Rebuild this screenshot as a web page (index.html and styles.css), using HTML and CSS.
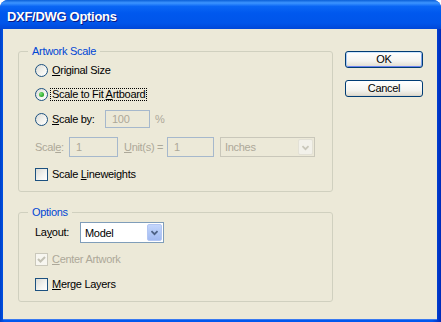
FILE: index.html
```html
<!DOCTYPE html>
<html lang="en">
<head>
    <meta charset="UTF-8">
    <meta name="viewport" content="width=device-width, initial-scale=1.0">
    <title>DXF/DWG Options</title>
    <link rel="stylesheet" href="styles.css">
</head>
<body>
    <div class="window">
        <div class="titlebar">DXF/DWG Options</div>

        <div class="client">
            <div class="groups">
                <fieldset class="group group-scale">
                    <legend>Artwork Scale</legend>

                    <div class="row h24">
                        <span class="radio"></span>
                        <span class="label"><u>O</u>riginal Size</span>
                    </div>

                    <div class="row h24">
                        <span class="radio checked"></span>
                        <span class="label focus">Scale to Fit <u>A</u>rtboard</span>
                    </div>

                    <div class="row h26">
                        <span class="radio"></span>
                        <span class="label label-by"><u>S</u>cale by:</span>
                        <span class="field field-pct">100</span>
                        <span class="unit-pct">%</span>
                    </div>

                    <div class="row h30 disabled">
                        <span class="label-scale">Scal<u>e</u>:</span>
                        <span class="field field-scale">1</span>
                        <span class="label-unit"><u>U</u>nit(s) =</span>
                        <span class="field field-unit">1</span>
                        <span class="select select-off">
                            <span class="select-value">Inches</span>
                            <span class="select-btn">
                                <svg width="15" height="17" viewBox="0 0 15 17"><polyline points="4,7 7.5,10.5 11,7" fill="none" stroke="#C9C7BA" stroke-width="2"/></svg>
                            </span>
                        </span>
                    </div>

                    <div class="row h24">
                        <span class="check"></span>
                        <span class="label">Scale <u>L</u>ineweights</span>
                    </div>
                </fieldset>

                <fieldset class="group group-options">
                    <legend>Options</legend>

                    <div class="row h26">
                        <span class="label-layout">La<u>y</u>out:</span>
                        <span class="select select-layout">
                            <span class="select-value">Model</span>
                            <span class="select-btn">
                                <svg width="15" height="17" viewBox="0 0 15 17"><polyline points="4,7 7.5,10.5 11,7" fill="none" stroke="#4D6185" stroke-width="2"/></svg>
                            </span>
                        </span>
                    </div>

                    <div class="row h28 disabled">
                        <span class="check check-off">
                            <svg width="11" height="11" viewBox="0 0 11 11"><polyline points="2,5 4.5,7.5 9,3" fill="none" stroke="#C3C1B4" stroke-width="2"/></svg>
                        </span>
                        <span class="label"><u>C</u>enter Artwork</span>
                    </div>

                    <div class="row h22">
                        <span class="check"></span>
                        <span class="label"><u>M</u>erge Layers</span>
                    </div>
                </fieldset>
            </div>

            <div class="buttons">
                <div class="btn btn-default">OK</div>
                <div class="btn">Cancel</div>
            </div>
        </div>
    </div>
</body>
</html>
```

FILE: styles.css
```css
body {
    margin: 0;
    background: #fff;
    font-family: "Liberation Sans", Arial, sans-serif;
    font-size: 11px;
    letter-spacing: -0.3px;
    color: #000;
}
.window {
    width: 441px;
    height: 322px;
    display: flex;
    flex-direction: column;
    background: linear-gradient(to right, #0040C8 0%, #0058EE 1%, #0058EE 98%, #0029B8 100%);
    border-radius: 8px 8px 0 0;
    overflow: hidden;
}
.titlebar {
    height: 29px;
    box-sizing: border-box;
    padding: 4px 0 0 7px;
    line-height: 25px;
    font-size: 13px;
    font-weight: bold;
    letter-spacing: -0.3px;
    color: #fff;
    text-shadow: 1px 1px #0A1883;
    background: linear-gradient(to bottom, #0A5FD8 0%, #3D95FF 10%, #0A66F4 22%, #0058EE 45%, #0055EA 80%, #0047D8 100%);
}
.client {
    flex: 1;
    margin: 0 4px 3px 3px;
    background: #ECE9D8;
    display: flex;
    align-items: flex-start;
    gap: 12px;
    padding: 16px 0 0 15px;
    box-shadow: 0 1px 0 #3A7AF0;
}

/* group boxes */
.groups {
    width: 315px;
}
.group {
    margin: 0;
    min-width: 0;
    border: 1px solid #D0D0BF;
    border-radius: 3px;
    padding: 0 0 5px 16px;
}
.group-options {
    margin-top: 14px;
    padding-bottom: 6px;
}
.group legend {
    margin-left: -7px;
    padding: 0 4px;
    line-height: 13px;
    color: #0046D5;
}
.row {
    display: flex;
    align-items: center;
}
.h22 { height: 22px; }
.h24 { height: 24px; }
.h26 { height: 26px; }
.h28 { height: 28px; }
.h30 { height: 30px; }
.disabled { color: #ACA899; }

.label {
    margin-left: 2px;
    padding: 0 1px;
    border: 1px dotted transparent;
    line-height: 11px;
}
.label.focus { border-color: #000; }
.label-by {
    width: 55px;
    box-sizing: border-box;
}
.unit-pct {
    margin-left: 5px;
    color: #ACA899;
}
.label-scale { width: 34px; }
.label-unit { width: 43px; margin-left: 6px; }
.label-layout { width: 45px; }

/* radios and checks */
.radio, .check {
    flex: none;
    width: 13px;
    height: 13px;
    box-sizing: border-box;
    border: 1px solid #1C5180;
    background: linear-gradient(135deg, #DCDCD7 0%, #F4F4F0 60%, #FFFFFF 100%);
    position: relative;
}
.radio { border-radius: 50%; }
.radio.checked::after {
    content: "";
    position: absolute;
    left: 3px;
    top: 3px;
    width: 5px;
    height: 5px;
    border-radius: 50%;
    background: radial-gradient(circle at 35% 35%, #7CE27A, #21A121 75%);
}
.check-off {
    border-color: #CAC8BB;
    background: #F7F6F0;
    display: flex;
}
.check-off svg { display: block; }

/* edit fields */
.field {
    flex: none;
    box-sizing: border-box;
    height: 20px;
    border: 1px solid #A6B8CC;
    background: #ECE9D8;
    color: #ACA899;
    padding-left: 6px;
    line-height: 18px;
}
.field-pct { width: 45px; height: 18px; line-height: 16px; }
.field-scale { width: 49px; }
.field-unit { width: 47px; }

/* combo boxes */
.select {
    flex: none;
    box-sizing: border-box;
    display: flex;
    align-items: stretch;
    border: 1px solid #7F9DB9;
    background: #fff;
    padding: 1px;
}
.select-value {
    flex: 1;
    padding-left: 3px;
    line-height: 17px;
}
.select-btn {
    width: 15px;
    box-sizing: border-box;
    border-radius: 2px;
    display: flex;
    align-items: center;
}
.select-off {
    width: 95px;
    height: 20px;
    margin-left: 6px;
    border-color: #C9C7BA;
    background: #ECE9D8;
}
.select-off .select-btn {
    background: #F2F1EA;
    border: 1px solid #E3E1D6;
}
.select-layout {
    width: 84px;
    height: 21px;
    color: #000;
}
.select-layout .select-value { line-height: 18px; }
.select-layout .select-btn {
    background: linear-gradient(to bottom, #C4D6FC 0%, #B2C8F6 50%, #A2BAF2 100%);
    border: 1px solid #B3C6F3;
}

/* buttons */
.buttons {
    margin-top: 6px;
    display: flex;
    flex-direction: column;
    gap: 12px;
}
.btn {
    width: 78px;
    height: 17px;
    box-sizing: border-box;
    border: 1px solid #003C74;
    border-radius: 3px;
    background: linear-gradient(to bottom, #FFFFFF 0%, #F4F4F0 60%, #E4E1D6 90%, #D6D0C5 100%);
    text-align: center;
    line-height: 15px;
}
.btn-default {
    box-shadow: inset 0 1px #CEE7FF, inset 1px 0 #A9C9F5, inset -1px 0 #7EA2EB, inset 0 -1px #6982EE;
}
```
